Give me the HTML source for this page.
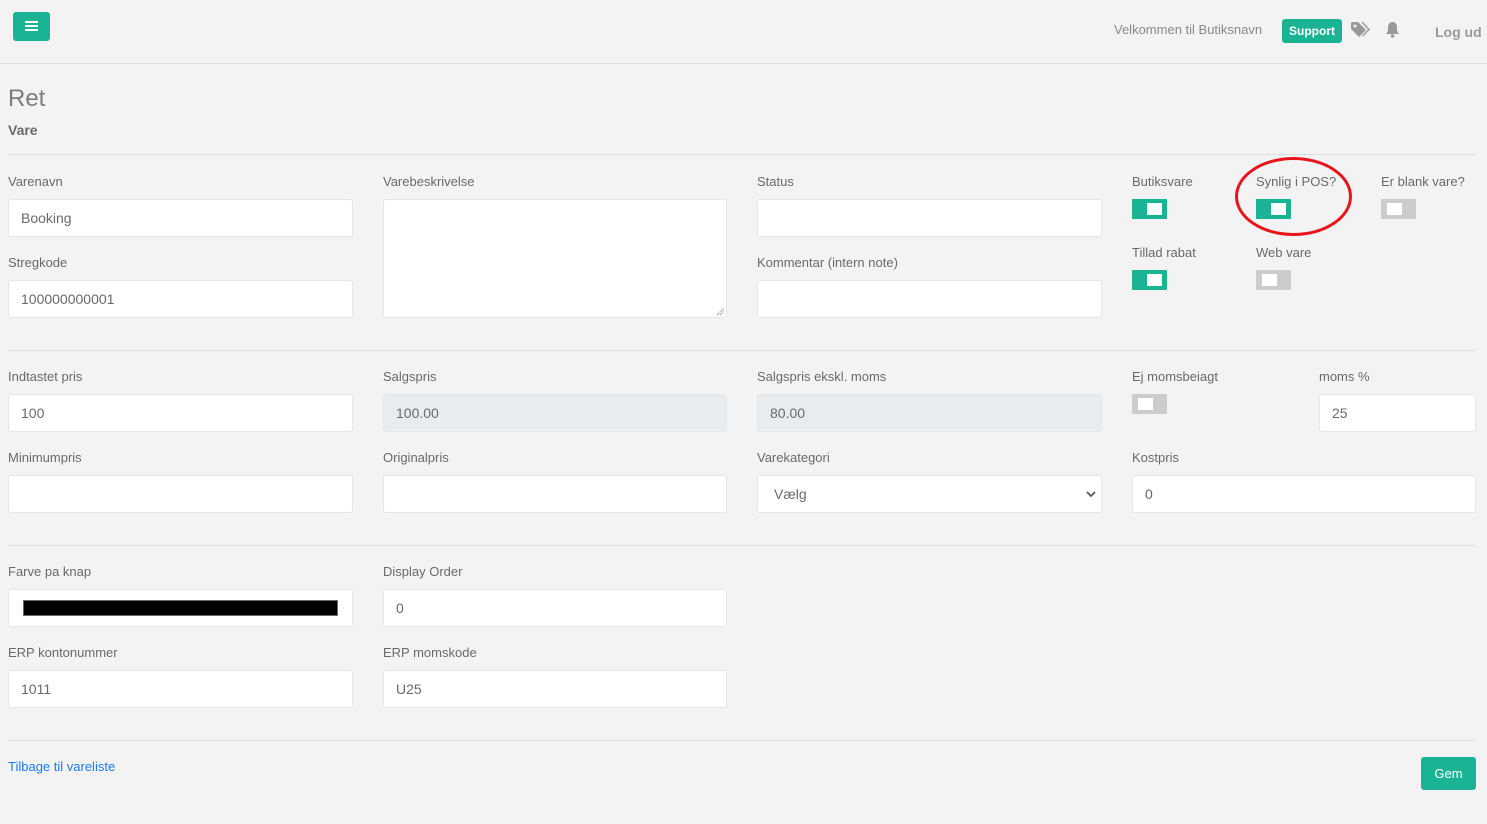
<!DOCTYPE html>
<html><head><meta charset="utf-8"><style>
*{box-sizing:border-box;margin:0;padding:0}
body{width:1487px;height:824px;background:#f3f3f4;font-family:"Liberation Sans",sans-serif;color:#676a6c;position:relative;overflow:hidden;font-size:13px}
.a{position:absolute}
.lbl{position:absolute;font-size:13px;color:#676a6c;line-height:16px}
.inp{position:absolute;height:38px;background:#fff;border:1px solid #e5e6e7;border-radius:3px;font-size:14px;color:#676a6c;padding-left:12px;line-height:36px}
.dis{background:#e9ecef}
.hr{position:absolute;left:8px;width:1468px;height:1px;background:#ddd}
.tg{position:absolute;width:35px;height:20px;background:#1ab394}
.tg i{position:absolute;top:4px;right:5px;width:15px;height:12px;background:#fff}
.off{background:#ccc}
.off i{left:6px;right:auto}
</style></head><body>
<div class="a" style="left:13px;top:12px;width:37px;height:29px;background:#1ab394;border-radius:3px">
<div class="a" style="left:12px;top:9px;width:13px;height:2px;background:#fff"></div>
<div class="a" style="left:12px;top:13px;width:13px;height:2px;background:#fff"></div>
<div class="a" style="left:12px;top:17px;width:13px;height:2px;background:#fff"></div>
</div>
<div class="a" style="left:1114px;top:22px;font-size:13px;color:#888">Velkommen til Butiksnavn</div>
<div class="a" style="left:1282px;top:19px;width:60px;height:24px;background:#1ab394;border-radius:3px;color:#fff;font-weight:bold;font-size:12px;text-align:center;line-height:24px">Support</div>
<svg class="a" style="left:1351px;top:22px" width="19" height="16" viewBox="0 0 19 16"><path d="M0 1v6l8 8 7-7-8-8H1z" fill="#999"/><circle cx="4" cy="4" r="1.5" fill="#f3f3f4"/><path d="M10 0h2l7 7.5-7 7-1-1 6-6z" fill="#999"/></svg>
<svg class="a" style="left:1385px;top:21px" width="15" height="17" viewBox="0 0 15 17"><path d="M7.5 1C4.5 1 3 3.5 3 6v4L1 13h13l-2-3V6c0-2.5-1.5-5-4.5-5z" fill="#999"/><circle cx="7.5" cy="15" r="1.8" fill="#999"/></svg>
<div class="a" style="left:1435px;top:24px;font-size:14px;font-weight:bold;color:#999">Log ud</div>
<div class="a" style="left:0;top:63px;width:1487px;height:1px;background:#ddd"></div>
<div class="a" style="left:8px;top:85px;font-size:24px;font-weight:300;color:#7a7c7e">Ret</div>
<div class="a" style="left:8px;top:122px;font-size:14px;font-weight:bold;color:#676a6c">Vare</div>
<div class="hr" style="top:154px"></div>

<div class="lbl" style="left:8px;top:174px">Varenavn</div>
<div class="inp" style="left:8px;top:199px;width:345px">Booking</div>
<div class="lbl" style="left:8px;top:255px">Stregkode</div>
<div class="inp" style="left:8px;top:280px;width:345px">100000000001</div>
<div class="lbl" style="left:383px;top:174px">Varebeskrivelse</div>
<div class="inp" style="left:383px;top:199px;width:344px;height:119px"></div>
<svg class="a" style="left:716px;top:307px" width="9" height="9"><path d="M1 8L8 1M4 8L8 4" stroke="#666" stroke-width="1" stroke-dasharray="1 1"/></svg>
<div class="lbl" style="left:757px;top:174px">Status</div>
<div class="inp" style="left:757px;top:199px;width:345px"></div>
<div class="lbl" style="left:757px;top:255px">Kommentar (intern note)</div>
<div class="inp" style="left:757px;top:280px;width:345px"></div>

<div class="lbl" style="left:1132px;top:174px">Butiksvare</div>
<div class="tg" style="left:1132px;top:199px"><i></i></div>
<div class="lbl" style="left:1256px;top:174px">Synlig i POS?</div>
<div class="tg" style="left:1256px;top:199px"><i></i></div>
<div class="lbl" style="left:1381px;top:174px">Er blank vare?</div>
<div class="tg off" style="left:1381px;top:199px"><i></i></div>
<div class="lbl" style="left:1132px;top:245px">Tillad rabat</div>
<div class="tg" style="left:1132px;top:270px"><i></i></div>
<div class="lbl" style="left:1256px;top:245px">Web vare</div>
<div class="tg off" style="left:1256px;top:270px"><i></i></div>
<div class="a" style="left:1235px;top:157px;width:117px;height:79px;border:3px solid #e8141c;border-radius:50%"></div>

<div class="hr" style="top:350px"></div>
<div class="lbl" style="left:8px;top:369px">Indtastet pris</div>
<div class="inp" style="left:8px;top:394px;width:345px">100</div>
<div class="lbl" style="left:383px;top:369px">Salgspris</div>
<div class="inp dis" style="left:383px;top:394px;width:344px">100.00</div>
<div class="lbl" style="left:757px;top:369px">Salgspris ekskl. moms</div>
<div class="inp dis" style="left:757px;top:394px;width:345px">80.00</div>
<div class="lbl" style="left:1132px;top:369px">Ej momsbeiagt</div>
<div class="tg off" style="left:1132px;top:394px"><i></i></div>
<div class="lbl" style="left:1319px;top:369px">moms %</div>
<div class="inp" style="left:1319px;top:394px;width:157px">25</div>

<div class="lbl" style="left:8px;top:450px">Minimumpris</div>
<div class="inp" style="left:8px;top:475px;width:345px"></div>
<div class="lbl" style="left:383px;top:450px">Originalpris</div>
<div class="inp" style="left:383px;top:475px;width:344px"></div>
<div class="lbl" style="left:757px;top:450px">Varekategori</div>
<div class="inp" style="left:757px;top:475px;width:345px;padding-left:16px">Vælg</div>
<svg class="a" style="left:1086px;top:491px" width="10" height="7"><path d="M1 1l4 4 4-4" stroke="#555" stroke-width="1.8" fill="none"/></svg>
<div class="lbl" style="left:1132px;top:450px">Kostpris</div>
<div class="inp" style="left:1132px;top:475px;width:344px">0</div>

<div class="hr" style="top:545px"></div>
<div class="lbl" style="left:8px;top:564px">Farve pa knap</div>
<div class="inp" style="left:8px;top:589px;width:345px"><div class="a" style="left:14px;top:10px;width:315px;height:16px;background:#000;border:1px solid #666"></div></div>
<div class="lbl" style="left:383px;top:564px">Display Order</div>
<div class="inp" style="left:383px;top:589px;width:344px">0</div>
<div class="lbl" style="left:8px;top:645px">ERP kontonummer</div>
<div class="inp" style="left:8px;top:670px;width:345px">1011</div>
<div class="lbl" style="left:383px;top:645px">ERP momskode</div>
<div class="inp" style="left:383px;top:670px;width:344px">U25</div>

<div class="hr" style="top:740px"></div>
<div class="a" style="left:8px;top:759px;font-size:13px;color:#1a7bf0">Tilbage til vareliste</div>
<div class="a" style="left:1421px;top:757px;width:55px;height:33px;background:#1ab394;border-radius:3px;color:#fff;font-size:13px;text-align:center;line-height:33px">Gem</div>
</body></html>
